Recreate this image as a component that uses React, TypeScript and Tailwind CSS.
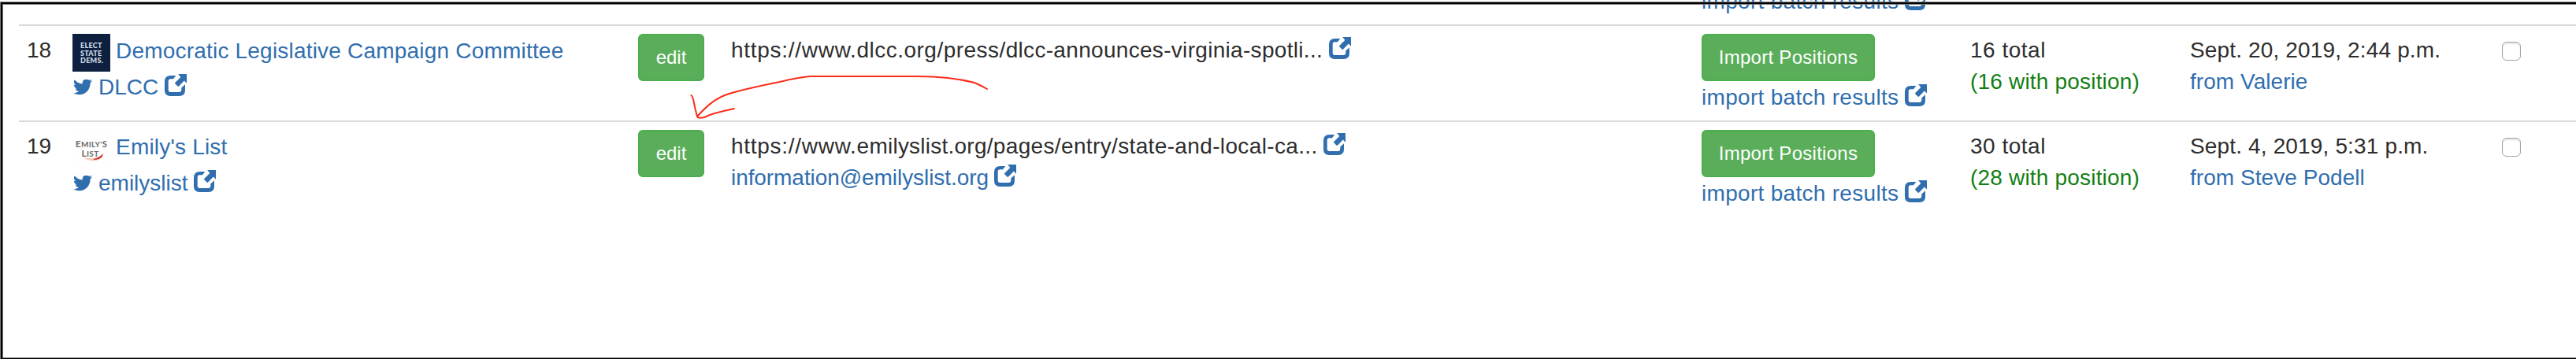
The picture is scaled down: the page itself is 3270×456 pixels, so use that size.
import React from "react";

const LINK = "text-[#306eae]";

function NewWindow() {
  return (
    <svg viewBox="0 0 28 28" className="ml-[7.500px] inline-block h-[28px] w-[28px] align-[-2px]" fill="#306eae">
      <path d="M17.200 0H28v11.800l-3.200-3.200-6.700 6.800c-.6.600-1.100.600-1.700 0l-2.900-2.900c-.6-.6-.6-1.100 0-1.700l6.800-6.800z" />
      <path d="M14.300 2 11 6.300H7.500Q4.700 6.300 4.700 8.900V20Q4.700 22.900 7.500 22.900H18.500Q21.300 22.900 21.300 20V17.500L26 13.200V20.500Q26 28 18.500 28H7.500Q0 28 0 20.500V9.500Q0 2 7.500 2Z" />
    </svg>
  );
}

function Twitter() {
  return (
    <svg viewBox="0 2.900 24 19.500" preserveAspectRatio="none" className="mr-[8px] ml-[1px] inline-block h-[20px] w-[24px] align-[-1px]" fill="#306eae">
      <path d="M23.953 4.570a10 10 0 01-2.825.775 4.958 4.958 0 002.163-2.723c-.951.555-2.005.959-3.127 1.184a4.920 4.920 0 00-8.384 4.482C7.690 8.095 4.067 6.130 1.640 3.162a4.822 4.822 0 00-.666 2.475c0 1.710.870 3.213 2.188 4.096a4.904 4.904 0 01-2.228-.616v.060a4.923 4.923 0 003.946 4.827 4.996 4.996 0 01-2.212.085 4.936 4.936 0 004.604 3.417 9.867 9.867 0 01-6.102 2.105c-.390 0-.779-.023-1.170-.067a13.995 13.995 0 007.557 2.209c9.053 0 13.998-7.496 13.998-13.985 0-.210 0-.420-.015-.630A9.935 9.935 0 0024 4.590z" />
    </svg>
  );
}

function DlccLogo() {
  return (
    <div className="flex h-[48px] w-[48px] shrink-0 flex-col justify-center bg-[#0d2040] pt-[1px] pl-[10px] font-[Lato] text-[9px] leading-[9.700px] font-black tracking-[0.3px] text-[#d5dfe9]">
      <span>ELECT</span>
      <span>STATE</span>
      <span>DEMS.</span>
    </div>
  );
}

function EmilyLogo() {
  return (
    <div className="relative flex h-[48px] w-[48px] shrink-0 flex-col items-center bg-[#fefefe] pt-[12px] font-[Lato] text-[10px] leading-[11px] font-bold tracking-[0.3px] text-[#6a6a6a]">
      <span><span className="text-[12px]">E</span>MILY'<span className="text-[11px]">S</span></span>
      <span className="pr-[3px]"><span className="text-[12px]">L</span>IST</span>
      <svg className="absolute inset-0" width="48" height="48" viewBox="0 0 48 48">
        <path d="M14 35Q28 39 39 30Q37 39 27 39Q18 39 14 35Z" fill="#f0b08a" opacity=".7" />
        <path d="M27 37Q34 35.500 39 30Q38 38 27 38Z" fill="#c8342f" />
      </svg>
    </div>
  );
}

function Button({ label, className }: { label: string; className: string }) {
  return (
    <button className={`flex h-[60px] items-center justify-center rounded-[6px] border-2 border-[#4cae4c] bg-[#5aae5a] pb-[1px] text-[24px] text-white ${className}`}>
      {label}
    </button>
  );
}

function BatchLink() {
  return (
    <div className={LINK}>
      <span className="tracking-[0.3px]">import batch results</span>
      <NewWindow />
    </div>
  );
}

type Row = {
  n: number;
  logo: React.ReactNode;
  name: string;
  handle: string;
  url: React.ReactNode;
  email?: string;
  total: string;
  positions: string;
  date: string;
  from: string;
};

const rows: Row[] = [
  {
    n: 18, logo: <DlccLogo />, name: "Democratic Legislative Campaign Committee", handle: "DLCC",
    url: (
      <>
        <span className="tracking-[0.72px]">https://www.</span>
        <span className="tracking-[0.47px]">dlcc.org/press/</span>
        <span className="tracking-[0.31px]">dlcc-announces-virginia-spotli...</span>
      </>
    ),
    total: "16 total", positions: "(16 with position)", date: "Sept. 20, 2019, 2:44 p.m.", from: "from Valerie",
  },
  {
    n: 19, logo: <EmilyLogo />, name: "Emily's List", handle: "emilyslist",
    url: (
      <>
        <span className="tracking-[0.72px]">https://www.</span>
        <span className="tracking-[0.24px]">emilyslist.org/</span>
        <span className="tracking-[0.36px]">pages/entry/state-and-local-ca...</span>
      </>
    ),
    email: "information@emilyslist.org",
    total: "30 total", positions: "(28 with position)", date: "Sept. 4, 2019, 5:31 p.m.", from: "from Steve Podell",
  },
];

const COLS = "grid grid-cols-[58px_718px_118px_1232px_341px_279px_396px_1fr]";

export default function App() {
  return (
    <div className="relative h-[456px] w-[3270px] overflow-hidden bg-white font-['Liberation_Sans',sans-serif] text-[28px] leading-[40px] whitespace-nowrap text-[#2e2e2e]">
      <div className="h-[31px] overflow-hidden pl-[2160px]">
        <div className="-mt-[18px]"><BatchLink /></div>
      </div>
      <div className="pl-[24px]">
        {rows.map((r) => (
          <div key={r.n} className={`${COLS} h-[122px] border-t-2 border-[#d9d9d9] pt-[10px] pl-[10px]`}>
            <div className="pt-[1px]">{r.n}</div>
            <div className={LINK}>
              <div className="flex h-[48px] gap-[7px]">
                {r.logo}
                <span className="mt-[2px] tracking-[0.2px]">{r.name}</span>
              </div>
              <div><Twitter />{r.handle}<NewWindow /></div>
            </div>
            <div><Button label="edit" className="w-[84px]" /></div>
            <div className="pt-[1px]">
              <div>{r.url}<NewWindow /></div>
              {r.email && <div className={`${LINK} tracking-[-0.07px]`}>{r.email}<NewWindow /></div>}
            </div>
            <div>
              <Button label="Import Positions" className="mb-[1px] w-[220px] tracking-[0.28px]" />
              <BatchLink />
            </div>
            <div className="pt-[1px]">
              <div className="tracking-[0.5px]">{r.total}</div>
              <div className="tracking-[0.19px] text-[#128012]">{r.positions}</div>
            </div>
            <div className="pt-[1px]">
              <div className="tracking-[0.15px]">{r.date}</div>
              <div className={`${LINK} tracking-[0.05px]`}>{r.from}</div>
            </div>
            <div>
              <div className="mt-[10px] h-[24px] w-[24px] rounded-[6px] border border-[#a3a3a3] bg-white shadow-[inset_0_2px_2px_#e5e5e5]" />
            </div>
          </div>
        ))}
      </div>
      <svg className="absolute top-0 left-0" width="3270" height="456" fill="none">
        <g stroke="#fb2c1a" strokeWidth="2" strokeLinecap="round" strokeLinejoin="round">
          <path d="M1253 113Q1244 108 1237 105Q1206 97 1164 97L1028 97Q1010 99 990 104C960 110 936 115 920 121C905 127 895 137 885 148Q882 137 880 126Q879 122 877.500 121" />
          <path d="M885 148Q886 151 894 149Q900 146 907 144Q918 141 932 138" />
        </g>
      </svg>
      <div className="absolute top-[2px] left-0 h-[460px] w-[3280px] border-4 border-[#7a7a7a]" />
      <div className="absolute top-[3px] left-[1px] h-[460px] w-[3280px] border-2 border-black" />
      <div className="absolute top-[454px] left-[3px] h-[2px] w-[3267px] border-t border-[#7a7a7a] bg-black" />
    </div>
  );
}
